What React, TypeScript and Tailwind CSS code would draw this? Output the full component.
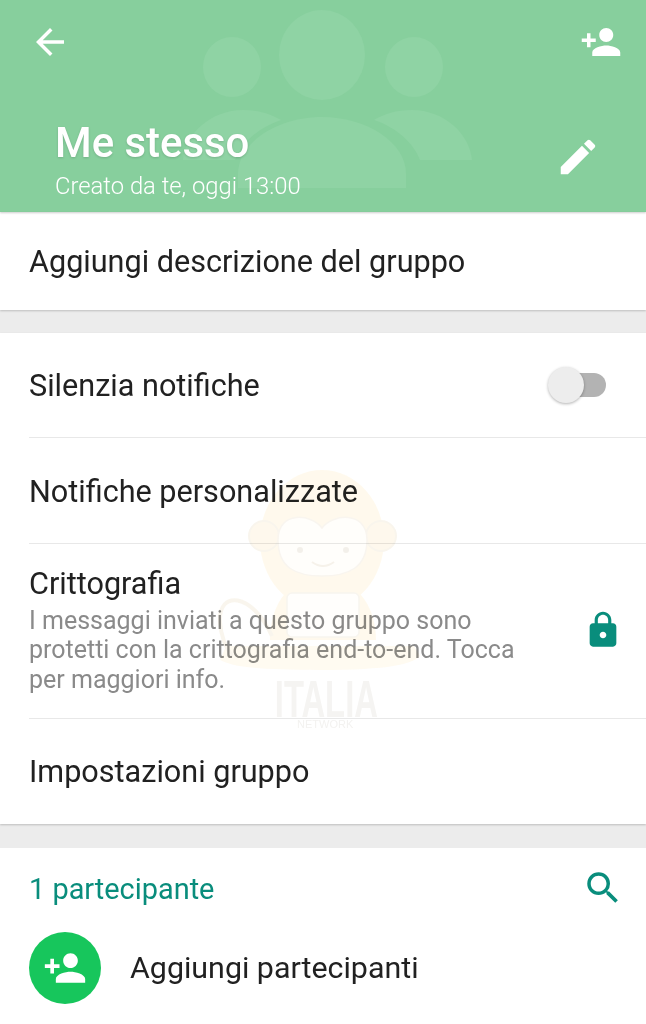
import React from "react";

const AddPerson = ({ className }: { className: string }) => (
  <svg viewBox="0 0 24 24" className={className} fill="currentColor">
    <path d="M15 12c2.21 0 4-1.79 4-4s-1.79-4-4-4-4 1.79-4 4 1.79 4 4 4zm-9-2V7H4v3H1v2h3v3h2v-3h3v-2H6zm9 4c-2.67 0-8 1.34-8 4v2h16v-2c0-2.66-5.33-4-8-4z" />
  </svg>
);

const Row = ({ children, className }: { children: React.ReactNode; className: string }) => (
  <div className={`flex items-center text-[#212121] text-[30.6px] leading-[36px] ${className}`}>{children}</div>
);

const Divider = () => <div className="h-px bg-[#e8e8e8] ml-[29px]" />;

const Watermark = () => (
  <div className="absolute left-[200px] top-[450px] w-[240px] h-[300px] mix-blend-multiply pointer-events-none">
    <svg viewBox="0 0 240 300" className="absolute inset-0 w-full h-full opacity-60" fill="none">
      <path d="M20 210c12 6 30 10 100 10s92-6 100-14l-6-10H26z" fill="#fff8e8" />
      <ellipse cx="122" cy="90" rx="62" ry="70" fill="#fff6e2" />
      <circle cx="64" cy="86" r="15" fill="#fdf4e2" stroke="#f5efe2" strokeWidth="2" />
      <circle cx="181" cy="86" r="15" fill="#fdf4e2" stroke="#f5efe2" strokeWidth="2" />
      <path d="M122 78c-10-14-44-18-44 12 0 28 18 36 44 36s45-8 45-36c0-30-35-26-45-12z" fill="#fffdf9" stroke="#f5efe4" strokeWidth="1.5" />
      <circle cx="100" cy="100" r="3" fill="#ece7dd" />
      <circle cx="146" cy="100" r="3" fill="#ece7dd" />
      <path d="M112 112q11 8 22 0" stroke="#f0e9dc" strokeWidth="2" />
      <path d="M70 190c0-30 14-62 52-62s54 32 54 62z" fill="#fff6e2" />
      <path d="M72 186c-20-44-54-46-52-14 1 14 6 26 12 34" stroke="#f5efe2" strokeWidth="4" />
      <rect x="87" y="143" width="72" height="44" rx="5" fill="#fffefb" stroke="#f3eee4" strokeWidth="1.5" />
    </svg>
    <div className="absolute left-[45px] top-[230px] w-[161px] text-center font-['Liberation_Sans',sans-serif] font-bold text-[#f5f4f2] text-[52px] leading-[38px] scale-x-[0.63]">ITALIA</div>
    <div className="absolute left-[97px] top-[268px] w-[56px] text-center font-['Liberation_Sans',sans-serif] text-[#f3f2f0] text-[11px] leading-[13px] whitespace-nowrap">NETWORK</div>
  </div>
);

export default function App() {
  return (
    <div className="relative w-[646px] h-[1024px] overflow-hidden bg-white font-['Roboto',sans-serif]">
      <header className="relative h-[212px] bg-[#87cf9d] shadow-[0_1px_2px_rgba(0,0,0,0.2)] overflow-hidden">
        <svg viewBox="0 0 646 212" className="absolute inset-0 w-full h-full" fill="#8fd3a4">
          <ellipse cx="322" cy="55" rx="43" ry="45" />
          <ellipse cx="232" cy="67" rx="29" ry="30" />
          <ellipse cx="414" cy="67" rx="29" ry="30" />
          <path d="M183 160c2-26 28-50 60-50 16 0 28 4 38 10-24 8-40 24-46 40z" />
          <path d="M472 160c-2-26-28-50-60-50-16 0-28 4-38 10 24 8 40 24 46 40z" />
          <path d="M238 188v-14c0-32 40-57 84-57s84 25 84 57v14z" />
        </svg>
        <div className="relative flex items-center justify-between px-[29px] pt-[21px] text-white">
          <svg viewBox="0 0 24 24" className="w-[42px] h-[42px]" fill="currentColor">
            <path d="M20 11H7.83l5.59-5.59L12 4l-8 8 8 8 1.41-1.41L7.83 13H20v-2z" />
          </svg>
          <AddPerson className="w-[42px] h-[42px] -mr-[5px]" />
        </div>
        <div className="relative flex items-center justify-between pl-[55px] pr-[45px] pt-[55px] text-white">
          <div>
            <div className="text-[41.9px] leading-[50px] font-medium drop-shadow-[0_1px_1px_rgba(0,0,0,0.15)]">Me stesso</div>
            <div className="text-[23.8px] leading-[32px] font-light text-white mt-[2px]">Creato da te, oggi 13:00</div>
          </div>
          <svg viewBox="0 0 24 24" className="w-[46px] h-[46px] -mt-[6px]" fill="currentColor">
            <path d="M3 17.25V21h3.75L17.81 9.94l-3.75-3.75L3 17.25zM20.71 7.04a1 1 0 0 0 0-1.41l-2.34-2.34a1 1 0 0 0-1.41 0l-1.83 1.83 3.75 3.75 1.83-1.83z" />
          </svg>
        </div>
      </header>

      <Row className="h-[98px] px-[29px] shadow-[0_1px_2px_rgba(0,0,0,0.2)] relative pt-[2px]">Aggiungi descrizione del gruppo</Row>
      <div className="h-[23px] bg-[#ececec]" />

      <section className="relative bg-white shadow-[0_1px_2px_rgba(0,0,0,0.2)]">
        <Row className="h-[104px] justify-between pl-[29px] pr-[40px] pt-[2px]">
          Silenzia notifiche
          <div className="relative w-[58px] h-[26px] -mt-[3px]">
            <div className="absolute right-0 top-[1px] w-[50px] h-[24px] rounded-full bg-[#b3b3b3]" />
            <div className="absolute left-0 -top-[5px] w-[36px] h-[36px] rounded-full bg-[#ededed] shadow-[0_1px_3px_rgba(0,0,0,0.3)]" />
          </div>
        </Row>
        <Divider />
        <Row className="h-[105px] pl-[29px] pt-[2px]">Notifiche personalizzate</Row>
        <Divider />
        <div className="flex items-center justify-between h-[174px] pl-[29px] pr-[23px]">
          <div className="w-[510px] -mt-[2px]">
            <div className="text-[#212121] text-[30.6px] leading-[36px] mb-[4px]">Crittografia</div>
            <div className="text-[#8a8a8a] text-[25px] leading-[29.5px]">
              I messaggi inviati a questo gruppo sono<br />protetti con la crittografia end-to-end. Tocca<br />per maggiori info.
            </div>
          </div>
          <svg viewBox="0 0 24 24" className="w-[40px] h-[40px] -mt-[3px] text-[#098d7c]" fill="currentColor">
            <path d="M18 8h-1V6c0-2.76-2.24-5-5-5S7 3.24 7 6v2H6c-1.1 0-2 .9-2 2v10c0 1.1.9 2 2 2h12c1.1 0 2-.9 2-2V10c0-1.1-.9-2-2-2zm-6 9c-1.1 0-2-.9-2-2s.9-2 2-2 2 .9 2 2-.9 2-2 2zm3.1-9H8.9V6c0-1.71 1.39-3.1 3.1-3.1 1.71 0 3.1 1.39 3.1 3.1v2z" />
          </svg>
        </div>
        <Divider />
        <Row className="h-[105px] pl-[29px]">Impostazioni gruppo</Row>
      </section>
      <div className="h-[24px] bg-[#ececec]" />

      <section className="bg-white">
        <div className="flex items-center justify-between h-[84px] pl-[29px] pr-[22px] text-[#098d7c]">
          <span className="text-[28.9px] leading-[34px] -mt-[2px]">1 partecipante</span>
          <svg viewBox="0 0 24 24" className="w-[42px] h-[42px] -mt-[5px]" fill="currentColor">
            <path d="M15.5 14h-.79l-.28-.27A6.47 6.47 0 0 0 16 9.5 6.5 6.5 0 1 0 9.5 16c1.61 0 3.09-.59 4.23-1.57l.27.28v.79l5 4.99L20.49 19l-4.99-5zm-6 0C7.01 14 5 11.99 5 9.5S7.01 5 9.5 5 14 7.01 14 9.5 11.99 14 9.5 14z" />
          </svg>
        </div>
        <div className="flex items-center pl-[29px]">
          <div className="flex items-center justify-center w-[72px] h-[72px] rounded-full bg-[#17c65c] text-white">
            <AddPerson className="w-[44px] h-[44px]" />
          </div>
          <span className="ml-[29px] text-[#212121] text-[30.4px] leading-[36px]">Aggiungi partecipanti</span>
        </div>
      </section>

      <Watermark />
    </div>
  );
}
